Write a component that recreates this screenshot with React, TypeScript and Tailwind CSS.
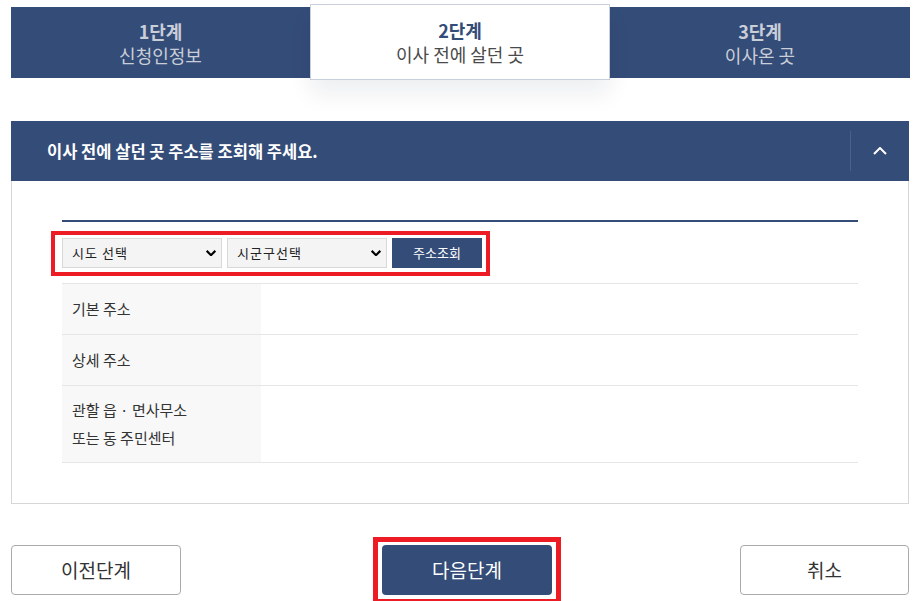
import { useState } from "react";

const font = { fontFamily: '"Noto Sans CJK KR", "Noto Sans", sans-serif' };

interface Step {
  no: string;
  label: string;
}

const steps: Step[] = [
  { no: "1단계", label: "신청인정보" },
  { no: "2단계", label: "이사 전에 살던 곳" },
  { no: "3단계", label: "이사온 곳" },
];

function Chevron({ className, width = 2 }: { className?: string; width?: number }) {
  return (
    <svg viewBox="0 0 14 8" className={className} fill="none" stroke="currentColor" strokeWidth={width}>
      <path d="M1 1l6 6 6-6" />
    </svg>
  );
}

function Select({ placeholder }: { placeholder: string }) {
  return (
    <div className="relative w-[160px] h-[30px]">
      <select
        className="appearance-none w-full h-full bg-[#f4f4f4] border border-[#d9d9d9] pl-[9px] pr-6 text-[13px] text-[#222] tracking-[0.08em] outline-none"
        style={font}
        defaultValue=""
      >
        <option value="">{placeholder}</option>
      </select>
      <Chevron width={3} className="pointer-events-none absolute right-[6px] top-[12px] w-[10px] h-[6px] text-black" />
    </div>
  );
}

export default function App() {
  const [active] = useState(1);

  return (
    <div className="w-[920px] h-[601px] bg-white overflow-hidden" style={font}>
      {/* Steps */}
      <div className="grid grid-cols-[299px_300px_300px] items-center mx-[11px] mt-[4px] h-[76px]">
        {steps.map((s, i) =>
          i === active ? (
            <div
              key={s.no}
              className="relative z-10 h-[76px] bg-white border border-[#c7cfdb] shadow-[0_14px_22px_rgba(20,30,60,0.07)] flex flex-col items-center justify-center"
            >
              <div className="text-[18px] font-bold text-[#344c78] leading-[24px]">{s.no}</div>
              <div className="text-[18px] text-[#4a4a4a] leading-[24px]">{s.label}</div>
            </div>
          ) : (
            <div key={s.no} className="h-[71px] mt-[1px] bg-[#344c78] flex flex-col items-center justify-center">
              <div className="text-[18px] font-bold text-[#c9ced8] leading-[24px]">{s.no}</div>
              <div className="text-[18px] text-[#c9ced8] leading-[24px]">{s.label}</div>
            </div>
          )
        )}
      </div>

      {/* Panel */}
      <div className="mx-[11px] mt-[41px]">
        <div className="h-[60px] bg-[#344c78] flex items-center">
          <h2 className="flex-1 pl-[36px] text-[16.5px] font-bold text-white">
            이사 전에 살던 곳 주소를 조회해 주세요.
          </h2>
          <div className="w-[59px] h-[40px] border-l border-[#4b6189] flex items-center justify-center">
            <Chevron width={2} className="w-[14px] h-[8px] text-white rotate-180" />
          </div>
        </div>

        <div className="border border-t-0 border-[#d6d6d6] px-[50px] pt-[39px] pb-[40px]">
          <div className="h-[2px] bg-[#344c78]" />

          <div className="mt-[9px] -ml-[11px] w-fit border-4 border-[#ed1c24] pt-[3px] pb-[4px] pl-[7px] pr-[4px] flex gap-[5px]">
            <Select placeholder="시도 선택" />
            <Select placeholder="시군구선택" />
            <button className="w-[90px] h-[30px] bg-[#344c78] text-white text-[13px]">주소조회</button>
          </div>

          <div className="mt-[7px] border-t border-[#e6e6e6] text-[15px] text-[#333]">
            <div className="flex h-[51px] border-b border-[#e6e6e6]">
              <div className="w-[199px] bg-[#f8f8f8] pl-[10px] flex items-center">기본 주소</div>
              <div className="flex-1" />
            </div>
            <div className="flex h-[51px] border-b border-[#e6e6e6]">
              <div className="w-[199px] bg-[#f8f8f8] pl-[10px] flex items-center">상세 주소</div>
              <div className="flex-1" />
            </div>
            <div className="flex h-[77px] border-b border-[#e6e6e6]">
              <div className="w-[199px] bg-[#f8f8f8] pl-[10px] flex flex-col justify-center leading-[28px]">
                <span>관할 읍 · 면사무소</span>
                <span>또는 동 주민센터</span>
              </div>
              <div className="flex-1" />
            </div>
          </div>
        </div>
      </div>

      {/* Buttons */}
      <div className="mx-[11px] mt-[33px] flex items-start">
        <button className="mt-[8px] w-[170px] h-[50px] border border-[#aaaaaa] rounded-[4px] text-[19px] text-[#333] bg-white">
          이전단계
        </button>
        <div className="ml-[192px] border-[5px] border-[#ed1c24] pt-[3px] px-[4px] pb-[4px]">
          <button className="w-[170px] h-[50px] rounded-[4px] bg-[#344c78] text-white text-[19px]">다음단계</button>
        </div>
        <button className="ml-auto mt-[8px] w-[169px] h-[50px] border border-[#aaaaaa] rounded-[4px] text-[19px] text-[#333] bg-white">
          취소
        </button>
      </div>
    </div>
  );
}
